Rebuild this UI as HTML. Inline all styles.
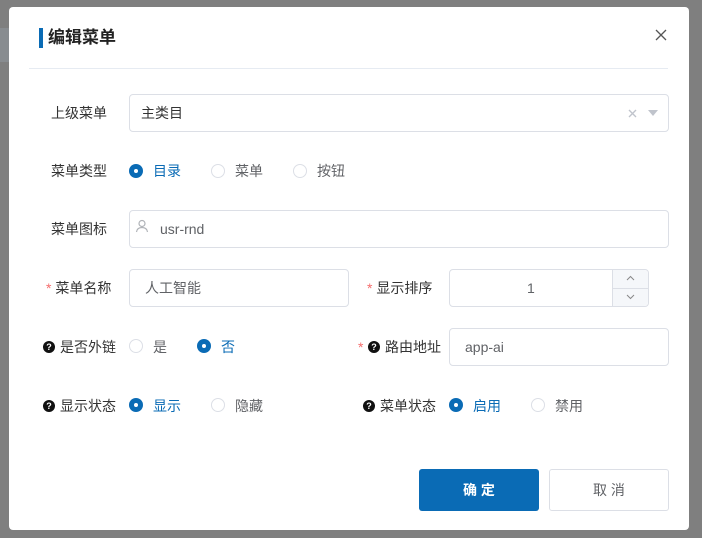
<!DOCTYPE html>
<html><head><meta charset="utf-8"><style>
*{box-sizing:border-box;margin:0;padding:0}
body{width:702px;height:538px;background:#7f7f7f;font-family:"Liberation Sans","Noto Sans CJK SC",sans-serif;font-size:14px;color:#333;position:relative;overflow:hidden}
.a{position:absolute}
.dlg{left:9px;top:7px;width:680px;height:523px;background:#fff;border-radius:4px}
.lbl{font-size:14px;color:#333;line-height:20px}
.inp{border:1px solid #dcdfe6;border-radius:4px;background:#fff;height:38px}
.r{width:14px;height:14px;border-radius:50%;border:1px solid #dcdfe6;background:#fff}
.rc{width:14px;height:14px;border-radius:50%;background:#0a6bb5;}
.rc:after{content:"";position:absolute;left:5px;top:5px;width:4px;height:4px;border-radius:50%;background:#fff}
.q{width:12px;height:12px;border-radius:50%;background:#111;color:#fff;font-size:9px;font-weight:bold;text-align:center;line-height:12px}
.st{color:#f56c6c}
.blue{color:#0a6bb5}
.gray{color:#606266}
</style></head><body>
<div class="a" style="left:0;top:28px;width:9px;height:34px;background:#888c90"></div>
<div class="a dlg"></div>
<div class="a" style="left:39px;top:28px;width:4px;height:20px;background:#0a6bb5"></div>
<div class="a" style="left:48px;top:27px;font-size:17px;font-weight:bold;color:#222;line-height:22px">编辑菜单</div>
<svg class="a" style="left:655px;top:29px" width="12" height="12"><path d="M1 1L11 11M11 1L1 11" stroke="#555" stroke-width="1.3"/></svg>
<div class="a" style="left:29px;top:68px;width:639px;height:1px;background:#e6ebf2"></div>

<div class="a lbl" style="left:51px;top:103px">上级菜单</div>
<div class="a inp" style="left:129px;top:94px;width:540px"></div>
<div class="a lbl" style="left:141px;top:103px">主类目</div>
<svg class="a" style="left:628px;top:109px" width="9" height="9"><path d="M1 1L8 8M8 1L1 8" stroke="#c0c4cc" stroke-width="1.4"/></svg>
<svg class="a" style="left:648px;top:110px" width="10" height="6"><path d="M0 0H10L5 6Z" fill="#c0c4cc"/></svg>

<div class="a lbl" style="left:51px;top:161px">菜单类型</div>
<div class="a rc" style="left:129px;top:164px"></div><div class="a lbl blue" style="left:153px;top:161px">目录</div>
<div class="a r" style="left:211px;top:164px"></div><div class="a lbl gray" style="left:235px;top:161px">菜单</div>
<div class="a r" style="left:293px;top:164px"></div><div class="a lbl gray" style="left:317px;top:161px">按钮</div>

<div class="a lbl" style="left:51px;top:219px">菜单图标</div>
<div class="a inp" style="left:129px;top:210px;width:540px"></div>
<svg class="a" style="left:135px;top:219px" width="14" height="14"><circle cx="7" cy="4.5" r="3" fill="none" stroke="#b0b3b8" stroke-width="1.2"/><path d="M1.5 13C2 9.5 4 8.5 7 8.5S12 9.5 12.5 13" fill="none" stroke="#b0b3b8" stroke-width="1.2"/></svg>
<div class="a lbl gray" style="left:160px;top:219px">usr-rnd</div>

<div class="a lbl" style="left:46px;top:278px"><span class="st">*</span> 菜单名称</div>
<div class="a inp" style="left:129px;top:269px;width:220px"></div>
<div class="a lbl gray" style="left:145px;top:278px">人工智能</div>
<div class="a lbl" style="left:367px;top:278px"><span class="st">*</span> 显示排序</div>
<div class="a inp" style="left:449px;top:269px;width:200px"></div>
<div class="a" style="left:612px;top:270px;width:36px;height:36px;background:#f5f7fa;border-left:1px solid #dcdfe6;border-radius:0 4px 4px 0"></div>
<div class="a" style="left:612px;top:288px;width:36px;height:1px;background:#dcdfe6"></div>
<svg class="a" style="left:626px;top:275px" width="9" height="6"><path d="M1 5L4.5 1.5L8 5" fill="none" stroke="#888" stroke-width="1"/></svg>
<svg class="a" style="left:626px;top:294px" width="9" height="6"><path d="M1 1L4.5 4.5L8 1" fill="none" stroke="#888" stroke-width="1"/></svg>
<div class="a lbl gray" style="left:527px;top:278px">1</div>

<div class="a q" style="left:43px;top:341px">?</div>
<div class="a lbl" style="left:60px;top:337px">是否外链</div>
<div class="a r" style="left:129px;top:339px"></div><div class="a lbl gray" style="left:153px;top:337px">是</div>
<div class="a rc" style="left:197px;top:339px"></div><div class="a lbl blue" style="left:221px;top:337px">否</div>
<div class="a lbl" style="left:358px;top:337px"><span class="st">*</span></div>
<div class="a q" style="left:368px;top:341px">?</div>
<div class="a lbl" style="left:385px;top:337px">路由地址</div>
<div class="a inp" style="left:449px;top:328px;width:220px"></div>
<div class="a lbl gray" style="left:465px;top:337px">app-ai</div>

<div class="a q" style="left:43px;top:400px">?</div>
<div class="a lbl" style="left:60px;top:396px">显示状态</div>
<div class="a rc" style="left:129px;top:398px"></div><div class="a lbl blue" style="left:153px;top:396px">显示</div>
<div class="a r" style="left:211px;top:398px"></div><div class="a lbl gray" style="left:235px;top:396px">隐藏</div>
<div class="a q" style="left:363px;top:400px">?</div>
<div class="a lbl" style="left:380px;top:396px">菜单状态</div>
<div class="a rc" style="left:449px;top:398px"></div><div class="a lbl blue" style="left:473px;top:396px">启用</div>
<div class="a r" style="left:531px;top:398px"></div><div class="a lbl gray" style="left:555px;top:396px">禁用</div>

<div class="a" style="left:419px;top:469px;width:120px;height:42px;background:#0a6bb5;border-radius:3px;color:#fff;font-weight:bold;text-align:center;line-height:42px">确 定</div>
<div class="a" style="left:549px;top:469px;width:120px;height:42px;border:1px solid #dcdfe6;border-radius:3px;color:#606266;text-align:center;line-height:40px">取 消</div>
</body></html>
